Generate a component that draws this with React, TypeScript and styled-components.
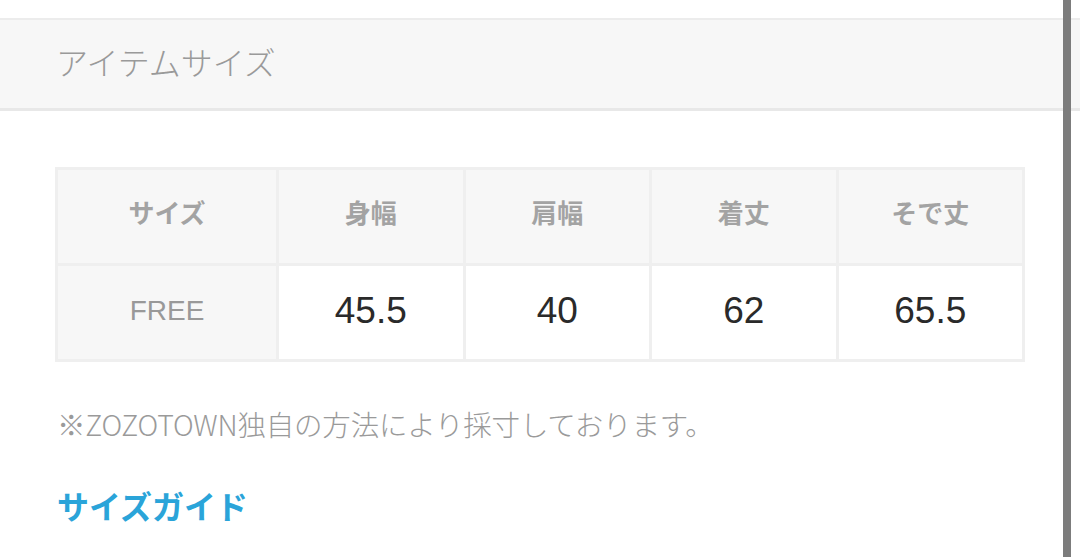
import React from "react";
import styled, { createGlobalStyle } from "styled-components";

const Global = createGlobalStyle`
  html, body { margin: 0; padding: 0; background: #fff; }
  body { font-family: "Noto Sans CJK JP", "Noto Sans", sans-serif; }
`;

const Page = styled.div`
  position: relative;
  width: 1080px;
  height: 557px;
  overflow: hidden;
  padding-top: 18px;
  box-sizing: border-box;
`;

const SectionHeader = styled.div`
  background: #f7f7f7;
  border-top: 2px solid #ececec;
  border-bottom: 3px solid #e8e8e8;
  display: flex;
  align-items: center;
  padding-left: 56px;
  padding-bottom: 6px;
  box-sizing: border-box;
  height: 93px;
`;

const SectionTitle = styled.h2`
  margin: 0;
  font-size: 32px;
  font-weight: 300;
  color: #9a9a9a;
  letter-spacing: 0;
`;

const Body = styled.div`
  padding: 56px 0 0 55px;
  width: 970px;
`;

const SizeTable = styled.table`
  width: 970px;
  border-collapse: collapse;
  table-layout: fixed;
  border: 3px solid #efefef;
`;

const HeadCell = styled.th`
  height: 83px;
  background: #f7f7f7;
  border: 3px solid #efefef;
  font-size: 26px;
  font-weight: 700;
  color: #a3a3a3;
  text-align: center;
  padding: 0 0 10px;
`;

const LabelCell = styled.th`
  height: 89px;
  background: #f7f7f7;
  border: 3px solid #efefef;
  font-family: "Liberation Sans", Arial, sans-serif;
  font-size: 28px;
  font-weight: 400;
  color: #999;
  text-align: center;
  padding: 0 0 4px;
`;

const ValueCell = styled.td`
  height: 89px;
  background: #fff;
  border: 3px solid #efefef;
  font-family: "Liberation Sans", Arial, sans-serif;
  font-size: 37px;
  color: #2a2a2a;
  text-align: center;
  padding: 0 0 4px;
`;

const Note = styled.p`
  margin: 42px 0 0 2px;
  font-size: 28.5px;
  font-weight: 300;
  color: #9a9a9a;
  letter-spacing: -0.2px;
  line-height: 40px;
  white-space: nowrap;
`;

const GuideLink = styled.a`
  display: inline-block;
  margin: 41px 0 0 2px;
  font-size: 32px;
  font-weight: 700;
  color: #2aa4d9;
  text-decoration: none;
  line-height: 40px;
  letter-spacing: 0;
`;

const ScrollBar = styled.div`
  position: absolute;
  top: 0;
  bottom: 0;
  left: 1063px;
  width: 8px;
  background: #7c7c7c;
`;

const headers = ["サイズ", "身幅", "肩幅", "着丈", "そで丈"];
const values = ["45.5", "40", "62", "65.5"];

export default function App() {
  return (
    <>
      <Global />
      <Page>
        <SectionHeader>
          <SectionTitle>アイテムサイズ</SectionTitle>
        </SectionHeader>
        <Body>
          <SizeTable>
            <colgroup>
              <col style={{ width: "221px" }} />
              <col />
              <col />
              <col />
              <col />
            </colgroup>
            <thead>
              <tr>
                {headers.map((h) => (
                  <HeadCell key={h}>{h}</HeadCell>
                ))}
              </tr>
            </thead>
            <tbody>
              <tr>
                <LabelCell>FREE</LabelCell>
                {values.map((v) => (
                  <ValueCell key={v}>{v}</ValueCell>
                ))}
              </tr>
            </tbody>
          </SizeTable>
          <Note>※ZOZOTOWN独自の方法により採寸しております。</Note>
          <GuideLink href="#">サイズガイド</GuideLink>
        </Body>
        <ScrollBar />
      </Page>
    </>
  );
}
